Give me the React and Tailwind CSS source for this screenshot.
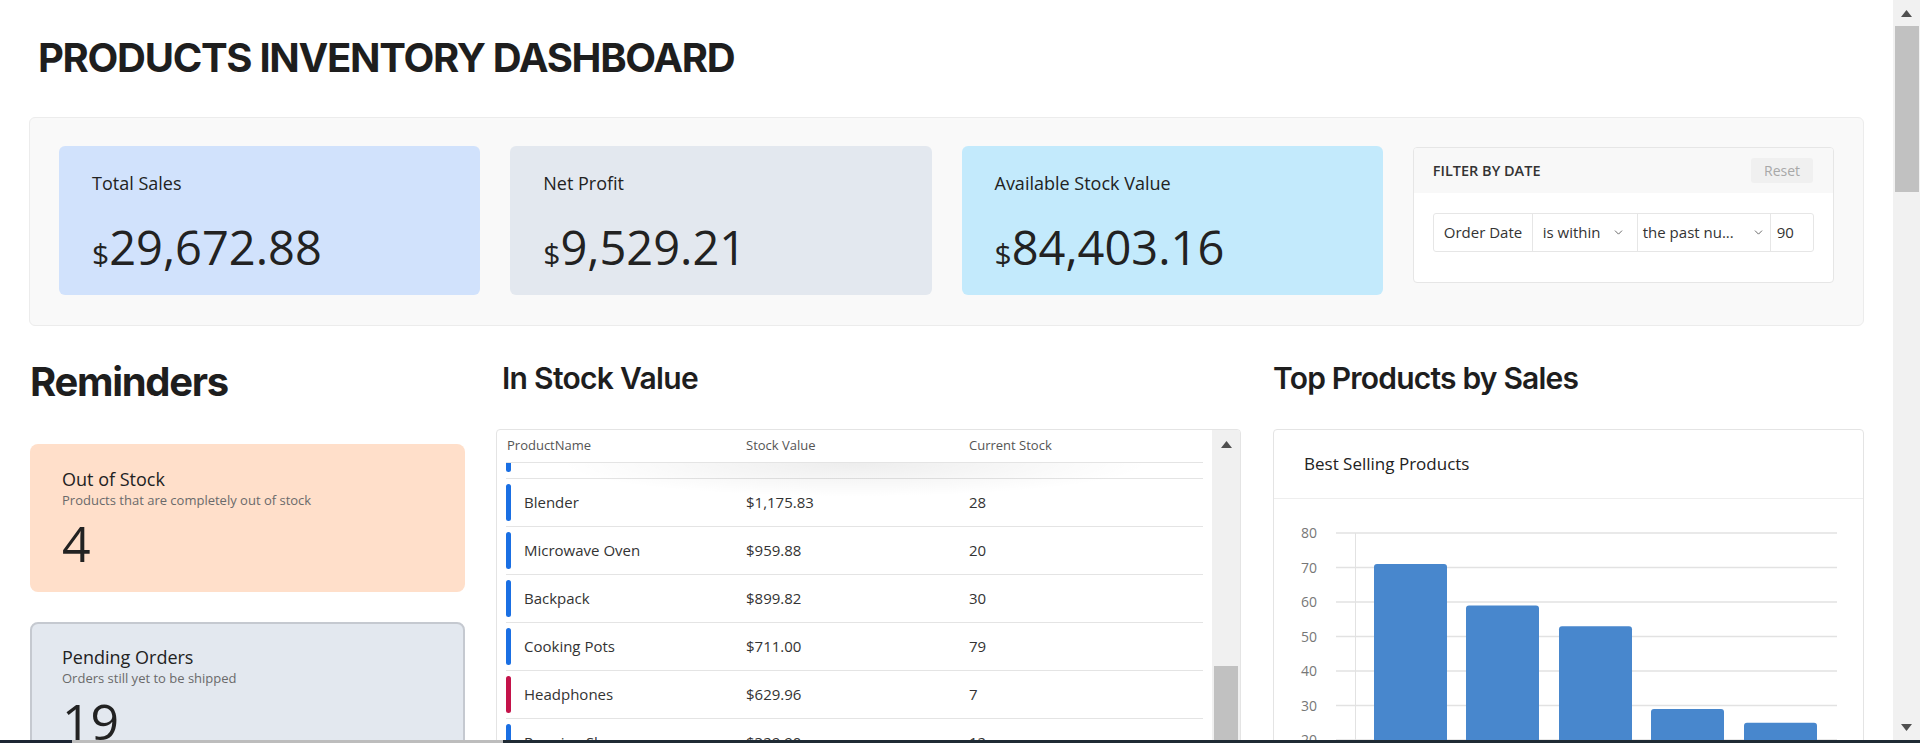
import React from "react";
import { ChevronDown } from "lucide-react";

function UpArrow() {
  return (
    <svg width="11" height="7" viewBox="0 0 11 7">
      <polygon points="0,7 5.5,0 11,7" fill="#505050" />
    </svg>
  );
}
function DownArrow() {
  return (
    <svg width="11" height="7" viewBox="0 0 11 7">
      <polygon points="0,0 5.5,7 11,0" fill="#505050" />
    </svg>
  );
}

function StatCard({ label, value, bg }) {
  return (
    <div className={`h-[149px] rounded-[6px] px-[33px] pt-[25px] ${bg}`}>
      <div className="text-[18px] leading-[24px] text-[#222]">{label}</div>
      <div className="mt-[29px] flex items-baseline text-[#222]">
        <span className="text-[30px] leading-[47px]">$</span>
        <span className="text-[47px] leading-[47px]">{value}</span>
      </div>
    </div>
  );
}

function FilterBox() {
  return (
    <div className="mt-[1px] overflow-hidden rounded-[4px] border border-[#e6e6e6] bg-white">
      <div className="flex h-[45px] items-center justify-between bg-[#f8f8f8] pl-[19px] pr-[20px]">
        <span className="text-[14.5px] font-semibold text-[#333]">FILTER BY DATE</span>
        <span className="flex h-[25px] w-[62px] items-center justify-center rounded-[3px] bg-[#f0f0f0] text-[14px] text-[#a8a8a8]">
          Reset
        </span>
      </div>
      <div className="px-[19px] pb-[30px] pt-[20px]">
        <div className="flex h-[39px] items-center rounded-[3px] border border-[#e6e6e6] text-[15px] text-[#333]">
          <div className="flex h-full w-[99px] items-center border-r border-[#e6e6e6] pl-[10px]">Order Date</div>
          <div className="flex h-full w-[105px] items-center justify-between border-r border-[#e6e6e6] pl-[10px] pr-[12px]">
            <span>is within</span>
            <ChevronDown size={13} strokeWidth={1.6} color="#555" />
          </div>
          <div className="flex h-full w-[133px] items-center justify-between border-r border-[#e6e6e6] pl-[5px] pr-[5px]">
            <span>the past nu...</span>
            <ChevronDown size={13} strokeWidth={1.6} color="#555" />
          </div>
          <div className="flex h-full flex-1 items-center pl-[6px]">90</div>
        </div>
      </div>
    </div>
  );
}

function ReminderCard({ title, sub, value, cls }) {
  return (
    <div className={`h-[148px] rounded-[8px] ${cls}`}>
      <div className="text-[18px] leading-[24px] text-[#222]">{title}</div>
      <div className="text-[13px] leading-[18px] text-[#6a6a6a]">{sub}</div>
      <div className="mt-[9px] text-[50px] leading-[50px] text-[#222]">{value}</div>
    </div>
  );
}

const rows = [
  { name: "Blender", value: "$1,175.83", stock: "28", color: "bg-[#1a6fe3]" },
  { name: "Microwave Oven", value: "$959.88", stock: "20", color: "bg-[#1a6fe3]" },
  { name: "Backpack", value: "$899.82", stock: "30", color: "bg-[#1a6fe3]" },
  { name: "Cooking Pots", value: "$711.00", stock: "79", color: "bg-[#1a6fe3]" },
  { name: "Headphones", value: "$629.96", stock: "7", color: "bg-[#c4134a]" },
  { name: "Running Shoes", value: "$329.90", stock: "12", color: "bg-[#1a6fe3]" },
];

function StockTable() {
  return (
    <div className="flex h-[330px] overflow-hidden rounded-[4px] border border-[#e4e4e4] bg-white">
      <div className="relative flex-1 px-[9px]">
        <div className="relative z-10 grid h-[33px] grid-cols-[240px_223px_1fr] items-center border-b border-[#e4e4e4] bg-white text-[13px] text-[#555]">
          <span className="pl-[1px]">ProductName</span>
          <span>Stock Value</span>
          <span>Current Stock</span>
        </div>
        <div className="pointer-events-none absolute left-[60px] right-[60px] top-[33px] z-20 h-[34px] bg-[radial-gradient(ellipse_at_top,rgba(0,0,0,0.07),rgba(0,0,0,0)_70%)]" />
        <div className="flex h-[16px] items-start border-b border-[#e4e4e4]">
          <div className="h-[9px] w-[5px] rounded-b-full bg-[#1a6fe3]" />
        </div>
        {rows.map((r) => (
          <div
            key={r.name}
            className="grid h-[48px] grid-cols-[240px_223px_1fr] items-center border-b border-[#e4e4e4] text-[15px] text-[#333]"
          >
            <div className="flex items-center">
              <div className={`h-[37px] w-[5px] rounded-full ${r.color}`} />
              <span className="ml-[13px]">{r.name}</span>
            </div>
            <span>{r.value}</span>
            <span>{r.stock}</span>
          </div>
        ))}
      </div>
      <div className="flex w-[28px] flex-col items-center bg-[#f0f0f0]">
        <div className="flex h-[28px] items-center justify-center">
          <UpArrow />
        </div>
        <div className="h-[208px]" />
        <div className="w-[24px] flex-1 bg-[#c1c1c1]" />
      </div>
    </div>
  );
}

function BarChart() {
  const top = 34;
  const step = 34.5;
  const labels = [80, 70, 60, 50, 40, 30, 20];
  const bars = [
    { x: 100, v: 71 },
    { x: 192, v: 59 },
    { x: 285, v: 53 },
    { x: 377, v: 29 },
    { x: 470, v: 25 },
  ];
  const H = 260;
  return (
    <svg width="589" height={H} className="block">
      {labels.map((l, i) => {
        const y = top + i * step;
        return (
          <g key={l}>
            <line x1="62" x2="563" y1={y} y2={y} stroke="#e2e2e2" strokeWidth="1.5" />
            <text
              x="43"
              y={y + 5}
              textAnchor="end"
              fontSize="14"
              fill="#777"
              fontFamily="'Open Sans', sans-serif"
            >
              {l}
            </text>
          </g>
        );
      })}
      <line x1="81.5" x2="81.5" y1={top} y2={H} stroke="#e2e2e2" strokeWidth="1" />
      {bars.map((b) => {
        const y = top + (80 - b.v) * (step / 10);
        const w = 73;
        const r = 3;
        const d = `M${b.x},${H} L${b.x},${y + r} Q${b.x},${y} ${b.x + r},${y} L${b.x + w - r},${y} Q${b.x + w},${y} ${b.x + w},${y + r} L${b.x + w},${H} Z`;
        return <path key={b.x} d={d} fill="#4887cd" />;
      })}
    </svg>
  );
}

export default function App() {
  return (
    <div className="flex h-[743px] w-[1920px] flex-col overflow-hidden bg-white font-['Open_Sans',sans-serif] text-[#222]">
      <div className="flex h-[740px]">
        <div className="h-[740px] flex-1 overflow-hidden px-[29px]">
          <h1 className="pl-[9px] pt-[34px] font-['Inter',sans-serif] text-[40px] font-bold leading-[48px] tracking-[-1.3px] text-[#1e1e1e]">
            PRODUCTS INVENTORY DASHBOARD
          </h1>
          <div className="mt-[35px] grid grid-cols-4 items-start gap-[30px] rounded-[6px] border border-[#ececec] bg-[#f9f9f9] px-[29px] pb-[30px] pt-[28px]">
            <StatCard label="Total Sales" value="29,672.88" bg="bg-[#d1e2fc]" />
            <StatCard label="Net Profit" value="9,529.21" bg="bg-[#e3e8ef]" />
            <StatCard label="Available Stock Value" value="84,403.16" bg="bg-[#c3eafc]" />
            <FilterBox />
          </div>

          <div className="mt-[28px] flex items-start">
            <div className="w-[436px]">
              <h2 className="mt-[4px] pl-[1px] font-['Inter',sans-serif] text-[40px] font-bold leading-[48px] tracking-[-1.3px] text-[#1e1e1e]">
                Reminders
              </h2>
              <div className="mt-[38px] pl-[1px]">
                <ReminderCard
                  title="Out of Stock"
                  sub="Products that are completely out of stock"
                  value="4"
                  cls="bg-[#ffdfca] px-[32px] pt-[23px]"
                />
                <div className="mt-[30px]">
                  <ReminderCard
                    title="Pending Orders"
                    sub="Orders still yet to be shipped"
                    value="19"
                    cls="border-2 border-[#c5c9d0] bg-[#e3e8ef] px-[30px] pt-[21px]"
                  />
                </div>
              </div>
            </div>

            <div className="ml-[31px] w-[745px]">
              <h2 className="mt-[6px] pl-[6px] font-['Inter',sans-serif] text-[30px] font-semibold leading-[36px] tracking-[-0.7px] text-[#1e1e1e]">
                In Stock Value
              </h2>
              <div className="mt-[33px]">
                <StockTable />
              </div>
            </div>

            <div className="ml-[32px] w-[591px]">
              <h2 className="mt-[6px] font-['Inter',sans-serif] text-[30px] font-semibold leading-[36px] tracking-[-0.8px] text-[#1e1e1e]">
                Top Products by Sales
              </h2>
              <div className="mt-[33px] h-[330px] overflow-hidden rounded-[4px] border border-[#e4e4e4] bg-white">
                <div className="flex h-[69px] items-center border-b border-[#eeeeee] pl-[30px] text-[17px] text-[#222]">
                  Best Selling Products
                </div>
                <BarChart />
              </div>
            </div>
          </div>
        </div>

        <div className="flex w-[27px] flex-col items-center bg-[#f1f1f1]">
          <div className="flex h-[26px] items-center justify-center">
            <UpArrow />
          </div>
          <div className="h-[166px] w-[24px] bg-[#c1c1c1]" />
          <div className="flex-1" />
          <div className="flex h-[26px] items-center justify-center">
            <DownArrow />
          </div>
        </div>
      </div>
      <div className="flex h-[3px]">
        <div className="w-[72px] bg-[#1d2633]" />
        <div className="w-[431px] bg-[#bdbdbd]" />
        <div className="flex-1 bg-[#1f2a34]" />
      </div>
    </div>
  );
}
